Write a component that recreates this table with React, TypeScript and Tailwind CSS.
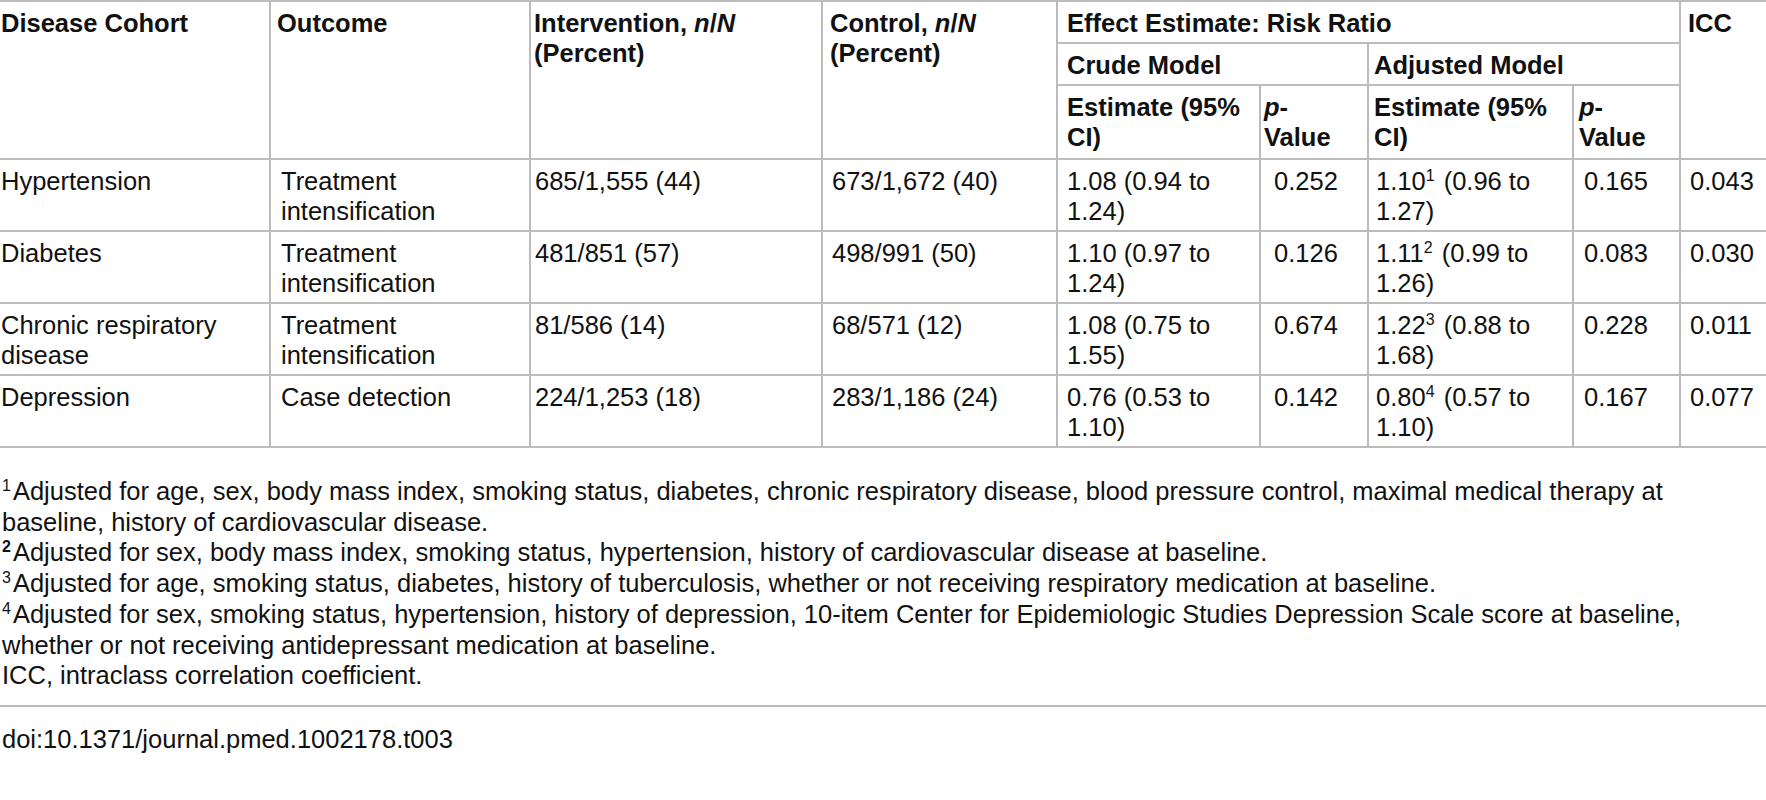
const rows = [
  {
    cohort: "Hypertension",
    outcome: "Treatment intensification",
    intervention: "685/1,555 (44)",
    control: "673/1,672 (40)",
    crude: "1.08 (0.94 to 1.24)",
    crudeP: "0.252",
    adjusted: "1.10",
    note: "1",
    ciLow: "(0.96 to",
    ciHigh: "1.27)",
    adjustedP: "0.165",
    icc: "0.043",
  },
  {
    cohort: "Diabetes",
    outcome: "Treatment intensification",
    intervention: "481/851 (57)",
    control: "498/991 (50)",
    crude: "1.10 (0.97 to 1.24)",
    crudeP: "0.126",
    adjusted: "1.11",
    note: "2",
    ciLow: "(0.99 to",
    ciHigh: "1.26)",
    adjustedP: "0.083",
    icc: "0.030",
  },
  {
    cohort: "Chronic respiratory disease",
    outcome: "Treatment intensification",
    intervention: "81/586 (14)",
    control: "68/571 (12)",
    crude: "1.08 (0.75 to 1.55)",
    crudeP: "0.674",
    adjusted: "1.22",
    note: "3",
    ciLow: "(0.88 to",
    ciHigh: "1.68)",
    adjustedP: "0.228",
    icc: "0.011",
  },
  {
    cohort: "Depression",
    outcome: "Case detection",
    intervention: "224/1,253 (18)",
    control: "283/1,186 (24)",
    crude: "0.76 (0.53 to 1.10)",
    crudeP: "0.142",
    adjusted: "0.80",
    note: "4",
    ciLow: "(0.57 to",
    ciHigh: "1.10)",
    adjustedP: "0.167",
    icc: "0.077",
  },
]

// base cell look; left rule and left padding are added per cell
const cell = "border-t-2 border-b-2 border-[#bcbcbc] align-top text-left pt-[6px] pr-1"
const th = `${cell} font-bold pb-[4px]`
const td = `${cell} pb-[4px]`
const rule = "border-l-2"

function Sup({ n, bold }: { n: string; bold?: boolean }) {
  return (
    <span className={`inline-block text-[16px] leading-[16px] align-[9px] mr-[2px] ${bold ? "font-bold" : ""}`}>
      {n}
    </span>
  )
}

export default function App() {
  return (
    <div className="w-[1766px] h-[800px] bg-white text-[#111] font-['Liberation_Sans',Arial,sans-serif] text-[25.5px] leading-[30px] overflow-hidden">
      <table className="w-full table-fixed border-collapse">
        <colgroup>
          <col className="w-[270px]" />
          <col className="w-[260px]" />
          <col className="w-[292px]" />
          <col className="w-[235px]" />
          <col className="w-[203px]" />
          <col className="w-[108px]" />
          <col className="w-[205px]" />
          <col className="w-[107px]" />
          <col className="w-[86px]" />
        </colgroup>
        <thead>
          <tr>
            <th rowSpan={3} className={`${th} pl-[1px]`}>Disease Cohort</th>
            <th rowSpan={3} className={`${th} ${rule} pl-[6px]`}>Outcome</th>
            <th rowSpan={3} className={`${th} ${rule} pl-[3px]`}>
              Intervention, <i>n</i>/<i>N</i> (Percent)
            </th>
            <th rowSpan={3} className={`${th} ${rule} pl-[7px]`}>
              Control, <i>n</i>/<i>N</i> (Percent)
            </th>
            <th colSpan={4} className={`${th} ${rule} pl-[9px]`}>Effect Estimate: Risk Ratio</th>
            <th rowSpan={3} className={`${th} ${rule} pl-[7px]`}>ICC</th>
          </tr>
          <tr>
            <th colSpan={2} className={`${th} ${rule} pl-[9px]`}>Crude Model</th>
            <th colSpan={2} className={`${th} ${rule} pl-[5px]`}>Adjusted Model</th>
          </tr>
          <tr>
            <th className={`${cell} font-bold pb-[6px] ${rule} pl-[9px]`}>Estimate (95% CI)</th>
            <th className={`${cell} font-bold pb-[6px] ${rule} pl-[3px]`}>
              <i>p</i>-<br />Value
            </th>
            <th className={`${cell} font-bold pb-[6px] ${rule} pl-[5px]`}>Estimate (95% CI)</th>
            <th className={`${cell} font-bold pb-[6px] ${rule} pl-[5px]`}>
              <i>p</i>-<br />Value
            </th>
          </tr>
        </thead>
        <tbody>
          {rows.map((r) => (
            <tr key={r.cohort}>
              <td className={`${td} pl-[1px]`}>{r.cohort}</td>
              <td className={`${td} ${rule} pl-[10px]`}>{r.outcome}</td>
              <td className={`${td} ${rule} pl-[4px]`}>{r.intervention}</td>
              <td className={`${td} ${rule} pl-[9px]`}>{r.control}</td>
              <td className={`${td} ${rule} pl-[9px]`}>{r.crude}</td>
              <td className={`${td} ${rule} pl-[13px]`}>{r.crudeP}</td>
              <td className={`${td} ${rule} pl-[7px]`}>
                <span className="whitespace-nowrap">
                  {r.adjusted}
                  <Sup n={r.note} /> {r.ciLow}
                </span>
                <br />
                {r.ciHigh}
              </td>
              <td className={`${td} ${rule} pl-[10px]`}>{r.adjustedP}</td>
              <td className={`${td} ${rule} pl-[9px]`}>{r.icc}</td>
            </tr>
          ))}
        </tbody>
      </table>

      <div className="pt-[28px] pl-[2px] leading-[30.7px] whitespace-nowrap">
        <p>
          <Sup n="1" />Adjusted for age, sex, body mass index, smoking status, diabetes, chronic respiratory disease, blood pressure control, maximal medical therapy at
          <br />
          baseline, history of cardiovascular disease.
        </p>
        <p>
          <Sup n="2" bold />Adjusted for sex, body mass index, smoking status, hypertension, history of cardiovascular disease at baseline.
        </p>
        <p>
          <Sup n="3" />Adjusted for age, smoking status, diabetes, history of tuberculosis, whether or not receiving respiratory medication at baseline.
        </p>
        <p>
          <Sup n="4" />Adjusted for sex, smoking status, hypertension, history of depression, 10-item Center for Epidemiologic Studies Depression Scale score at baseline,
          <br />
          whether or not receiving antidepressant medication at baseline.
        </p>
        <p>ICC, intraclass correlation coefficient.</p>
      </div>

      <div className="mt-[14px] border-t-2 border-[#bcbcbc] pt-[17px] pl-[2px]">
        doi:10.1371/journal.pmed.1002178.t003
      </div>
    </div>
  )
}
